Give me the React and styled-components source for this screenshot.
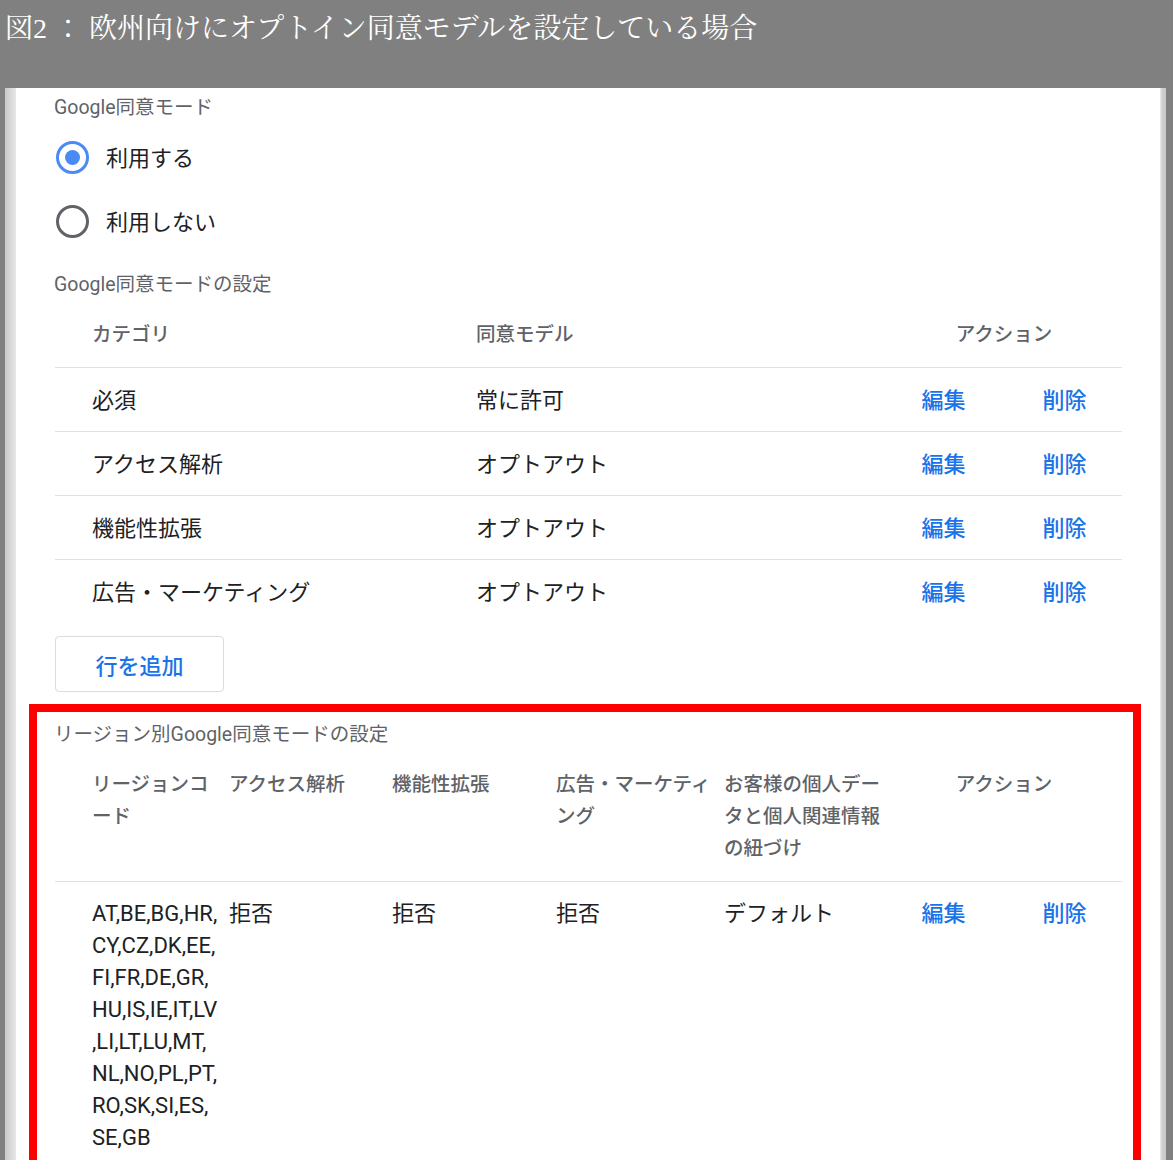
import React from "react"
import styled, { createGlobalStyle } from "styled-components"

const GlobalStyle = createGlobalStyle`
  html, body {
    margin: 0;
    padding: 0;
  }
  body {
    font-family: Roboto, "Noto Sans CJK JP", sans-serif;
    background: #808080;
  }
`

const Page = styled.div`
  height: 1160px;
  overflow: hidden;
  background: #808080;
`

const Caption = styled.div`
  height: 88px;
  padding-left: 5px;
  line-height: 58px;
  font-family: "Liberation Serif", "Noto Serif CJK JP", serif;
  font-size: 28px;
  color: #ffffff;
  white-space: nowrap;
`

const Frame = styled.div`
  display: flex;
  margin: 0 7px 0 5px;
  min-height: 1072px;
`

const LeftStrip = styled.div`
  flex-shrink: 0;
  width: 11px;
  background: linear-gradient(to right, #c9c9c9, #dedede 70%, #e6e6e6);
`

const RightStrip = styled.div`
  flex-shrink: 0;
  width: 6px;
  background: linear-gradient(to right, #ececec, #cfcfcf 40%, #c8c8c8);
`

const Panel = styled.div`
  flex: 1;
  min-width: 0;
  background: #ffffff;
  padding: 8px 38px 0 39px;
  display: flex;
  flex-direction: column;
`

const SectionLabel = styled.div`
  font-size: 19.5px;
  line-height: 24px;
  color: #5f6368;
  margin: 0 0 6px -1px;
`

const RadioGroup = styled.div`
  display: flex;
  flex-direction: column;
  margin: -2px 0 21px;
`

const RadioRow = styled.label`
  display: flex;
  align-items: center;
  height: 64px;
  gap: 17px;
  font-size: 22px;
  color: #202124;
`

const RadioCircle = styled.span`
  box-sizing: border-box;
  width: 33px;
  height: 33px;
  margin: 2px 0 0 1px;
  border-radius: 50%;
  border: 3px solid ${(p) => (p.checked ? "#4a8af4" : "#5f6368")};
  display: flex;
  align-items: center;
  justify-content: center;

  &::after {
    content: "";
    display: ${(p) => (p.checked ? "block" : "none")};
    width: 15px;
    height: 15px;
    border-radius: 50%;
    background: #4a8af4;
  }
`

const Table = styled.div`
  min-width: 0;
`

const Row = styled.div`
  display: grid;
  grid-template-columns: ${(p) => p.cols};
  padding: ${(p) => (p.head ? "16px" : "17px")} 0 ${(p) => (p.head ? "16px" : "15px")} 37px;
  border-bottom: ${(p) => (p.last ? "none" : "1px solid #e0e0e0")};
  line-height: ${(p) => (p.head ? "32px" : "31px")};
  font-size: ${(p) => (p.head ? "19.5px" : "22px")};
  font-weight: ${(p) => (p.head ? 500 : 400)};
  color: ${(p) => (p.head ? "#5f6368" : "#202124")};
`

const Cell = styled.div`
  white-space: nowrap;
  text-align: ${(p) => (p.center ? "center" : "left")};
`

const Actions = styled.div`
  display: grid;
  grid-template-columns: 121px 121px;
  align-items: start;
`

const LinkButton = styled.span`
  color: #1a73e8;
  font-weight: 500;
  text-align: center;
  cursor: pointer;
`

const AddButton = styled.button`
  box-sizing: border-box;
  margin: 13px 0 0 0;
  width: 169px;
  height: 56px;
  background: #ffffff;
  border: 1px solid #dadce0;
  border-radius: 4px;
  font-family: Roboto, "Noto Sans CJK JP", sans-serif;
  font-size: 22px;
  font-weight: 500;
  color: #1a73e8;
  cursor: pointer;
`

const Highlight = styled.section`
  margin: 12px -19px 0 -26px;
  padding: 11px 11px 0 18px;
  border: 8px solid #ff0000;
`

const CONSENT_COLS = "384px 407px 242px"
const REGION_COLS = "137px 163px 164px 168px 159px 242px"

const consentRows = [
  ["必須", "常に許可"],
  ["アクセス解析", "オプトアウト"],
  ["機能性拡張", "オプトアウト"],
  ["広告・マーケティング", "オプトアウト"],
]

const regionLines = [
  "AT,BE,BG,HR,",
  "CY,CZ,DK,EE,",
  "FI,FR,DE,GR,",
  "HU,IS,IE,IT,LV",
  ",LI,LT,LU,MT,",
  "NL,NO,PL,PT,",
  "RO,SK,SI,ES,",
  "SE,GB",
]

const Lines = ({ items }) =>
  items.map((t, i) => (
    <React.Fragment key={i}>
      {t}
      {i < items.length - 1 && <br />}
    </React.Fragment>
  ))

const ActionLinks = () => (
  <Actions>
    <LinkButton>編集</LinkButton>
    <LinkButton>削除</LinkButton>
  </Actions>
)

const App = () => {
  return (
    <Page>
      <GlobalStyle />
      <Caption>図2 ： 欧州向けにオプトイン同意モデルを設定している場合</Caption>
      <Frame>
        <LeftStrip />
        <Panel>
          <SectionLabel>Google同意モード</SectionLabel>
          <RadioGroup>
            <RadioRow>
              <RadioCircle checked />
              利用する
            </RadioRow>
            <RadioRow>
              <RadioCircle />
              利用しない
            </RadioRow>
          </RadioGroup>

          <SectionLabel>Google同意モードの設定</SectionLabel>
          <Table>
            <Row head cols={CONSENT_COLS}>
              <Cell>カテゴリ</Cell>
              <Cell>同意モデル</Cell>
              <Cell center>アクション</Cell>
            </Row>
            {consentRows.map(([name, model], i) => (
              <Row key={name} cols={CONSENT_COLS} last={i === consentRows.length - 1}>
                <Cell>{name}</Cell>
                <Cell>{model}</Cell>
                <ActionLinks />
              </Row>
            ))}
          </Table>
          <div>
            <AddButton>行を追加</AddButton>
          </div>

          <Highlight>
            <SectionLabel>リージョン別Google同意モードの設定</SectionLabel>
            <Table>
              <Row head cols={REGION_COLS}>
                <Cell><Lines items={["リージョンコ", "ード"]} /></Cell>
                <Cell>アクセス解析</Cell>
                <Cell>機能性拡張</Cell>
                <Cell><Lines items={["広告・マーケティ", "ング"]} /></Cell>
                <Cell><Lines items={["お客様の個人デー", "タと個人関連情報", "の紐づけ"]} /></Cell>
                <Cell center>アクション</Cell>
              </Row>
              <Row cols={REGION_COLS} last style={{ lineHeight: "32px", paddingTop: "16px" }}>
                <Cell><Lines items={regionLines} /></Cell>
                <Cell>拒否</Cell>
                <Cell>拒否</Cell>
                <Cell>拒否</Cell>
                <Cell>デフォルト</Cell>
                <ActionLinks />
              </Row>
            </Table>
          </Highlight>
        </Panel>
        <RightStrip />
      </Frame>
    </Page>
  )
}

export default App
